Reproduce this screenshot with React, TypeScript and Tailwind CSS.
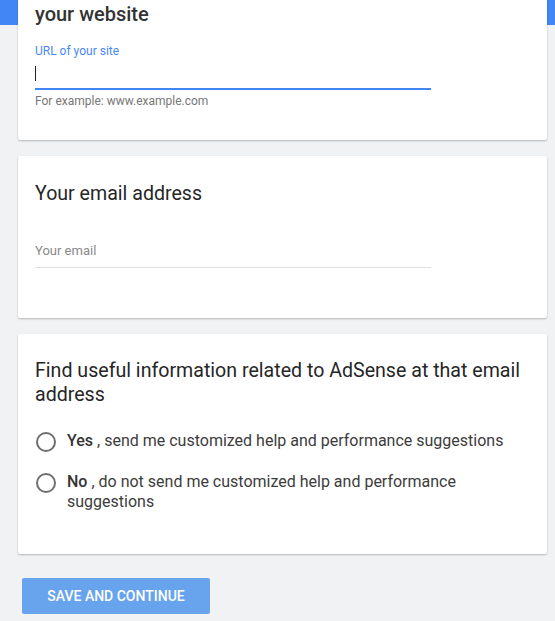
import React, { useState } from 'react';

function Radio({ checked, onClick }: { checked: boolean; onClick: () => void }) {
  return (
    <button
      type="button"
      onClick={onClick}
      className="mt-[1px] flex h-[20px] w-[20px] shrink-0 items-center justify-center rounded-full border-2 border-[#6f6f6f]"
    >
      {checked && <span className="h-[10px] w-[10px] rounded-full bg-[#4285f4]" />}
    </button>
  );
}

export default function App() {
  const [url, setUrl] = useState<string>('');
  const [email, setEmail] = useState<string>('');
  const [optIn, setOptIn] = useState<string>('');

  const options = [
    { key: 'yes', label: 'Yes', rest: ' , send me customized help and performance suggestions' },
    { key: 'no', label: 'No', rest: ' , do not send me customized help and performance suggestions' },
  ];

  return (
    <div className="min-h-screen bg-[#f1f2f4] font-['Roboto',sans-serif] text-[#333]">
      <div className="h-[25px] bg-[#4285f4]" />

      <div className="-mt-[35px] flex flex-col gap-[16px] pl-[18px] pr-[8px]">
        {/* website card */}
        <div className="rounded-[2px] bg-white px-[17px] pt-[12px] pb-[31px] shadow-[0_1px_2px_rgba(0,0,0,0.25)]">
          <h2 className="text-[20px] leading-[24px] font-medium text-[#333]">your website</h2>
          <div className="mt-[17px] w-[396px]">
            <label className="block text-[12px] leading-[16px] text-[#4a88f5]">URL of your site</label>
            <div className="flex h-[31px] items-center border-b-2 border-[#4285f4]">
              <span className="h-[15px] w-[1px] bg-[#222]" />
              <input
                value={url}
                onChange={(e) => setUrl(e.target.value)}
                className="w-full bg-transparent text-[14px] outline-none"
              />
            </div>
            <p className="mt-[3px] text-[12px] leading-[16px] text-[#777]">For example: www.example.com</p>
          </div>
        </div>

        {/* email card */}
        <div className="rounded-[2px] bg-white px-[17px] pt-[26px] pb-[50px] shadow-[0_1px_2px_rgba(0,0,0,0.25)]">
          <h2 className="text-[19.6px] leading-[24px] text-[#262626]">Your email address</h2>
          <div className="mt-[30px] w-[396px] border-b border-[#e0e0e0]">
            <input
              value={email}
              onChange={(e) => setEmail(e.target.value)}
              placeholder="Your email"
              className="h-[31px] w-full bg-transparent pb-[3px] text-[13px] text-[#333] outline-none placeholder:text-[#8a8a8a]"
            />
          </div>
        </div>

        {/* opt-in card */}
        <div className="rounded-[2px] bg-white px-[17px] pt-[25px] pb-[42px] shadow-[0_1px_2px_rgba(0,0,0,0.25)]">
          <h2 className="pr-[2px] text-[19.6px] leading-[24px] text-[#262626]">
            Find useful information related to AdSense at that email address
          </h2>
          <div className="mt-[24px] flex flex-col gap-[20px]">
            {options.map((o) => (
              <div key={o.key} className="flex items-start gap-[11px] pl-[1px]">
                <Radio checked={optIn === o.key} onClick={() => setOptIn(o.key)} />
                <p className="pr-[6px] text-[16px] leading-[20px] text-[#3c3c3c]">
                  <span className="font-medium text-[#333]">{o.label}</span>
                  {o.rest}
                </p>
              </div>
            ))}
          </div>
        </div>
      </div>

      <div className="pl-[22px] pt-[24px]">
        <button
          type="button"
          className="h-[36px] w-[188px] rounded-[2px] bg-[#68a3ed] text-[14px] font-medium text-white uppercase"
        >
          Save and continue
        </button>
      </div>
    </div>
  );
}
